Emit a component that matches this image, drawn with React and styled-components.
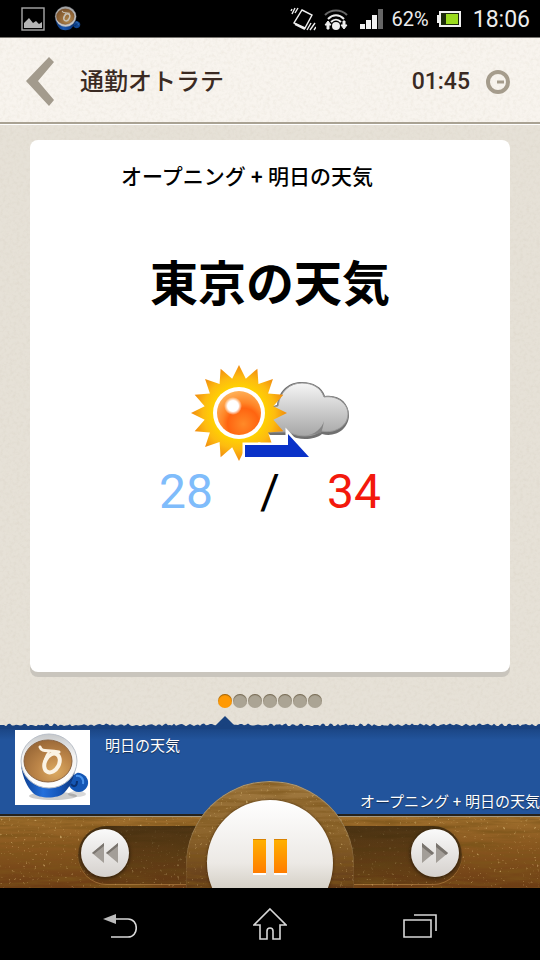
import { useState } from "react";
import styled, { createGlobalStyle } from "styled-components";

const svgUrl = (svg) => `url("data:image/svg+xml,${encodeURIComponent(svg)}")`;

// textures
const paper = svgUrl(
  `<svg xmlns="http://www.w3.org/2000/svg" width="240" height="240"><filter id="n"><feTurbulence type="fractalNoise" baseFrequency="0.3" numOctaves="3" stitchTiles="stitch"/><feColorMatrix values="0 0 0 0 0.5 0 0 0 0 0.44 0 0 0 0 0.34 0.9 0 0 0 -0.36"/></filter><rect width="240" height="240" filter="url(#n)" opacity="0.3"/></svg>`
);
const wood = svgUrl(
  `<svg xmlns="http://www.w3.org/2000/svg" width="540" height="110"><filter id="w"><feTurbulence type="fractalNoise" baseFrequency="0.02 0.22" numOctaves="4" seed="8"/><feColorMatrix values="0 0 0 0 0.2 0 0 0 0 0.09 0 0 0 0 0.01 1.8 0 0 0 -0.65"/></filter><filter id="s"><feTurbulence type="fractalNoise" baseFrequency="0.35" numOctaves="2" seed="3"/><feColorMatrix values="0 0 0 0 0.9 0 0 0 0 0.68 0 0 0 0 0.3 5 0 0 0 -3.4"/></filter><rect width="540" height="110" filter="url(#w)"/><rect width="540" height="110" filter="url(#s)" opacity="0.5"/></svg>`
);

// rough lower edge of the paper
const tornEdge = () => {
  let d = "M0 8";
  for (let x = 0; x <= 1200; x += 2) {
    const y = 4 + Math.sin(x * 2.3) * 0.8 + Math.sin(x * x * 0.37) * 0.8;
    d += `L${x} ${y.toFixed(1)}`;
  }
  return `${d}L1200 8Z`;
};

const sunRays = () => {
  const points = [];
  for (let i = 0; i < 32; i++) {
    const r = i % 2 ? 35 : 48;
    const a = (i * Math.PI) / 16;
    points.push(`${49 + r * Math.sin(a)},${48 - r * Math.cos(a)}`);
  }
  return points.join(" ");
};

const Cup = ({ size }) => (
  <svg width={size} height={size} viewBox="0 0 75 75" aria-hidden="true">
    <defs>
      <linearGradient id="cupBody" x1="0" x2="1">
        <stop offset="0" stopColor="#0c3d8c" />
        <stop offset="0.4" stopColor="#2470dc" />
        <stop offset="0.7" stopColor="#1555b8" />
        <stop offset="1" stopColor="#0a2f70" />
      </linearGradient>
      <linearGradient id="cupRim" x1="0" y1="0" x2="0" y2="1">
        <stop offset="0" stopColor="#c6c8ca" />
        <stop offset="0.4" stopColor="#f2f2f2" />
        <stop offset="1" stopColor="#ffffff" />
      </linearGradient>
      <radialGradient id="coffee" cx="0.65" cy="0.75" r="0.75">
        <stop offset="0" stopColor="#dcab62" />
        <stop offset="0.5" stopColor="#bd8649" />
        <stop offset="1" stopColor="#9c6a38" />
      </radialGradient>
    </defs>
    <ellipse cx="38" cy="66" rx="24" ry="4" fill="#000" opacity="0.2" />
    <ellipse cx="62" cy="64" rx="9" ry="3" fill="#000" opacity="0.15" />
    <path
      d="M54 48L62 43C66 42 72 46 73 51C74 57 69 62 64 62C60 62 57 60 54 56Z"
      fill="#1457b5"
    />
    <path d="M61 46C66 45 69 49 68 54" fill="none" stroke="#4a93ea" strokeWidth="2" />
    <path d="M56 54C59 58 62 56 62 51" fill="none" stroke="#0a3273" strokeWidth="2" />
    <path
      d="M6 36C8 48 12 57 18 63C24 69 43 69 49 63C55 57 59 48 61 36Z"
      fill="url(#cupBody)"
    />
    <ellipse cx="34" cy="31" rx="28" ry="27" fill="url(#cupRim)" />
    <ellipse cx="34" cy="31" rx="28" ry="27" fill="none" stroke="#b9bfc8" />
    <ellipse cx="33" cy="31" rx="24" ry="21" fill="url(#coffee)" stroke="#8a6340" />
    <g fill="none" stroke="#fbf3e4" strokeLinecap="round">
      <path d="M25 17C27 23 33 19 44 22" strokeWidth="3" />
      <path d="M34 22C30 26 30 30 29 34" strokeWidth="2" />
      <ellipse
        cx="37"
        cy="33"
        rx="7"
        ry="10"
        strokeWidth="4"
        transform="rotate(28 37 33)"
      />
    </g>
  </svg>
);

const Weather = () => (
  <svg width="160" height="98" viewBox="0 0 160 98" role="img" aria-label="晴れのち曇り">
    <defs>
      <radialGradient id="rays">
        <stop offset="0.5" stopColor="#ffd500" />
        <stop offset="0.75" stopColor="#fdbb10" />
        <stop offset="1" stopColor="#f08a10" />
      </radialGradient>
      <radialGradient id="disc" cx="0.6" cy="0.75" r="0.8">
        <stop offset="0" stopColor="#ff8a28" />
        <stop offset="0.45" stopColor="#ff6410" />
        <stop offset="0.6" stopColor="#ff8426" />
        <stop offset="1" stopColor="#ffb75e" />
      </radialGradient>
      <linearGradient id="cloud" x1="0" y1="0" x2="0" y2="1">
        <stop offset="0" stopColor="#f6f6f6" />
        <stop offset="1" stopColor="#a6a6a6" />
      </linearGradient>
      <radialGradient id="shine">
        <stop offset="0.6" stopColor="#fff" />
        <stop offset="1" stopColor="#fff" stopOpacity="0" />
      </radialGradient>
    </defs>
    <path
      d="M80 70C68 60 72 43 87 40C89 24 100 17 112 17C123 17 132 22 135 31C149 29 159 38 159 50C159 64 145 73 132 69C125 75 109 76 99 70Z"
      fill="#707070"
    />
    <path
      d="M80 67C68 58 73 44 88 41C90 26 100 18 112 18C123 18 131 23 134 32C148 30 158 39 158 49C158 61 145 69 131 66C122 73 107 72 99 67Z"
      fill="url(#cloud)"
      stroke="#9a9a9a"
    />
    <path d="M114 71C125 70 132 63 134 56C133 62 132 65 131 68Z" fill="#858585" />
    <polygon points={sunRays()} fill="url(#rays)" />
    <circle cx="49" cy="48" r="26" fill="#fff" />
    <circle cx="49" cy="48" r="22" fill="url(#disc)" />
    <circle cx="43" cy="41" r="9" fill="url(#shine)" />
    <path
      d="M55 80H98V69L119 92H55Z"
      fill="#0a32c8"
      stroke="#fff"
      strokeWidth="5"
      paintOrder="stroke"
    />
  </svg>
);

const App = () => {
  const [page, setPage] = useState(0);

  return (
    <Screen>
      <GlobalStyle />
      <StatusBar>
        <svg width="24" height="24" viewBox="0 0 24 24" aria-hidden="true">
          <rect x="1" y="1" width="22" height="22" fill="none" stroke="#a8a8a8" strokeWidth="1.4" />
          <path d="M3 21V16L8 11L12 16L15 14L18 17L21 15V21Z" fill="#b5b5b5" />
        </svg>
        <Dimmed>
          <Cup size={28} />
        </Dimmed>
        <Spacer />
        <svg width="26" height="26" viewBox="0 0 26 26" fill="none" stroke="#eee" aria-hidden="true">
          <path d="M12 4L22 9L15 22L4 17Z" strokeWidth="1.4" />
          <path d="M5 18L15 23" strokeWidth="2" />
          <path d="M8 2L5 7M5 2L2 8M2 3L1 5M25 17L20 24M21 17L17 24M26 21L24 24" strokeWidth="1.4" />
        </svg>
        <svg width="24" height="26" viewBox="0 0 24 26" fill="none" aria-hidden="true">
          <path d="M1 9C7 3 17 3 23 9" stroke="#666" strokeWidth="2" />
          <path d="M4 13C9 8 15 8 20 13M7 16C10 13 14 13 17 16" stroke="#eee" strokeWidth="2" />
          <circle cx="12" cy="20" r="4" fill="#eee" />
          <path d="M4 15L7 19H5V23H3V19H1ZM20 23L23 19H21V15H19V19H17Z" fill="#eee" stroke="#eee" />
        </svg>
        <Signal width="24" height="20" viewBox="0 0 24 20" aria-hidden="true">
          <path d="M0 15H5V20H0ZM6 11H11V20H6ZM12 6H17V20H12Z" fill="#f2f2f2" />
          <path d="M18 0H23V20H18Z" fill="#666" />
        </Signal>
        <Percent>62%</Percent>
        <svg width="24" height="16" viewBox="0 0 24 16" aria-hidden="true">
          <path d="M2 0H24V16H2V12H0V4H2Z" fill="#f0f0f0" />
          <path d="M4 2H22V14H4Z" fill="#1a2a08" />
          <path d="M9 3H21V13H9Z" fill="#9bdc1e" />
        </svg>
        <Clock>18:06</Clock>
      </StatusBar>

      <Header>
        <IconButton aria-label="戻る">
          <svg width="30" height="50" viewBox="0 0 30 50">
            <path d="M24 0L29 5L13 24L29 43L24 49L1 24Z" fill="#a39b8d" />
          </svg>
        </IconButton>
        <h1>通勤オトラテ</h1>
        <Remaining>01:45</Remaining>
        <IconButton aria-label="タイマー">
          <svg width="24" height="24" viewBox="0 0 24 24" fill="none" stroke="#a59c8c">
            <circle cx="12" cy="12" r="10" strokeWidth="4" />
            <path d="M11 12H18" strokeWidth="3" />
          </svg>
        </IconButton>
      </Header>

      <Main>
        <Card>
          <Subtitle>オープニング + 明日の天気</Subtitle>
          <h2>東京の天気</h2>
          <Weather />
          <Temperatures>
            <Temperature $color="#7fbcfb">28</Temperature>
            <Temperature $color="#000">/</Temperature>
            <Temperature $color="#f3190c">34</Temperature>
          </Temperatures>
        </Card>
        <Dots>
          {[0, 1, 2, 3, 4, 5, 6].map((i) => (
            <Dot
              key={i}
              $active={i === page}
              aria-label={`${i + 1}`}
              onClick={() => setPage(i)}
            />
          ))}
        </Dots>
      </Main>

      <NowPlaying>
        <Torn width="1200" height="8" viewBox="0 0 1200 8" aria-hidden="true">
          <path d={tornEdge()} fill="#19427f" />
        </Torn>
        <Artwork>
          <Cup size={75} />
        </Artwork>
        <Track>
          <span>明日の天気</span>
          <Program>オープニング + 明日の天気</Program>
        </Track>
      </NowPlaying>

      <Controls>
        <Groove>
          <RoundButton aria-label="前へ">
            <svg width="28" height="20" viewBox="0 0 28 20" fill="#a39e98">
              <path d="M13 0V20L1 10ZM27 0V20L15 10Z" />
              <path d="M13 0V3L3 11L1 10ZM27 0V3L17 11L15 10Z" fill="#79746e" />
            </svg>
          </RoundButton>
          <RoundButton aria-label="次へ">
            <svg width="28" height="20" viewBox="0 0 28 20" fill="#a39e98">
              <path d="M1 0V20L13 10ZM15 0V20L27 10Z" />
              <path d="M1 0V4L11 12L13 10ZM15 0V4L25 12L27 10Z" fill="#79746e" />
            </svg>
          </RoundButton>
        </Groove>
        <Hub>
          <PauseButton aria-label="一時停止">
            <i />
            <i />
          </PauseButton>
        </Hub>
      </Controls>

      <SystemNav>
        <IconButton aria-label="Back">
          <svg width="34" height="30" viewBox="0 0 34 30" fill="none" stroke="#d8d8d8">
            <path d="M12 10H25C36 10 36 28 25 28H8" strokeWidth="1.6" />
            <path d="M0 10L13 5V15Z" fill="#bcbcbc" stroke="none" />
          </svg>
        </IconButton>
        <IconButton aria-label="Home">
          <svg width="34" height="34" viewBox="0 0 34 34" fill="none" stroke="#d8d8d8">
            <path
              d="M17 2L33 18H27V32H20V24C20 20 14 20 14 24V32H7V18H1Z"
              strokeWidth="1.6"
            />
          </svg>
        </IconButton>
        <IconButton aria-label="Recent apps">
          <svg width="34" height="30" viewBox="0 0 34 30" fill="none" stroke="#d8d8d8" strokeWidth="1.6">
            <path d="M1 11H28V28H1Z" />
            <path d="M11 6H33V22" />
          </svg>
        </IconButton>
      </SystemNav>
    </Screen>
  );
};

// Styled Components
const GlobalStyle = createGlobalStyle`
  * {
    box-sizing: border-box;
    margin: 0;
    padding: 0;
  }

  body {
    background: #000;
    font-family: Roboto, "Noto Sans CJK JP", sans-serif;
  }

  button {
    border: none;
    background: none;
    cursor: pointer;
  }

  svg {
    display: block;
    flex-shrink: 0;
  }
`;

const Screen = styled.div`
  display: flex;
  flex-direction: column;
  min-height: 100vh;
  overflow: hidden;
`;

const StatusBar = styled.div`
  display: flex;
  align-items: center;
  gap: 8px;
  height: 38px;
  padding: 1px 10px 0 21px;
  background: #000;
  border-bottom: 1px solid #77746f;
  color: #ececec;
`;

const Dimmed = styled.span`
  opacity: 0.8;
`;

const Spacer = styled.span`
  flex: 1;
`;

const Signal = styled.svg`
  margin-left: 4px;
`;

const Percent = styled.span`
  font-size: 20px;
`;

const Clock = styled.span`
  margin-left: 4px;
  font-size: 23px;
`;

const Header = styled.header`
  display: flex;
  align-items: center;
  height: 86px;
  padding: 3px 30px 0 25px;
  background: ${paper}, #f8f4ee;
  border-bottom: 2px solid #a9a293;
  color: #3a2a22;

  h1 {
    flex: 1;
    margin-left: 25px;
    font-size: 24px;
    font-weight: 500;
    line-height: 36px;
  }
`;

const IconButton = styled.button`
  display: flex;
  align-items: center;
  justify-content: center;
`;

const Remaining = styled.time`
  margin-right: 16px;
  font-size: 23px;
  font-weight: 500;
`;

const Main = styled.main`
  display: flex;
  flex: 1;
  flex-direction: column;
  padding: 15px 30px 0;
  background: ${paper}, #e6e1d7;
  border-top: 1px solid #fff;
`;

const Card = styled.section`
  display: flex;
  flex: 1;
  flex-direction: column;
  align-items: center;
  padding: 21px 0;
  background: #fff;
  border-radius: 8px;
  box-shadow: 0 5px 0 #c9c5bd;
  color: #000;

  h2 {
    margin: 56px 0 44px;
    font-size: 48px;
    font-weight: 700;
    line-height: 72px;
  }
`;

const Subtitle = styled.p`
  align-self: stretch;
  padding-right: 46px;
  font-size: 21px;
  font-weight: 500;
  line-height: 32px;
  text-align: center;
`;

const Temperatures = styled.div`
  display: grid;
  grid-template-columns: repeat(3, 84px);
  font-size: 48px;
  line-height: 58px;
  text-align: center;
`;

const Temperature = styled.span`
  color: ${(props) => props.$color};
`;

const Dots = styled.nav`
  display: flex;
  align-items: center;
  justify-content: center;
  gap: 1px;
  height: 54px;
  padding-top: 4px;
`;

const Dot = styled.button`
  position: relative;
  width: 14px;
  height: 14px;
  border-radius: 50%;
  background: ${(props) => (props.$active ? "#ff9a05" : "#aba494")};
  box-shadow: inset 0 1px 1px rgba(60, 40, 10, 0.5);

  /* pointer towards the playing track */
  &::after {
    content: "";
    display: ${(props) => (props.$active ? "block" : "none")};
    position: absolute;
    top: 22px;
    left: -3px;
    border: 10px solid transparent;
    border-top: none;
    border-bottom-color: #19427f;
  }
`;

const NowPlaying = styled.section`
  position: relative;
  display: flex;
  height: 88px;
  padding: 4px 0 0 15px;
  background: linear-gradient(#19427f, #22549c 14px, #22549c);
  color: #fff;
  font-size: 15px;
  line-height: 24px;
  text-shadow: 0 1px 1px rgba(0, 0, 0, 0.5);
`;

const Torn = styled.svg`
  position: absolute;
  top: -5px;
  left: 0;
`;

const Artwork = styled.div`
  width: 75px;
  height: 75px;
  background: #fff;
`;

const Track = styled.div`
  display: flex;
  flex: 1;
  flex-direction: column;
  justify-content: space-between;
  padding: 4px 0 0 15px;
`;

const Program = styled.span`
  align-self: flex-end;
`;

const Controls = styled.section`
  position: relative;
  display: flex;
  justify-content: center;
  height: 74px;
  padding: 10px 78px 3px;
  background: ${wood}, linear-gradient(#a0702e, #8a581f 40%, #6b3c14);
  border-top: 2px solid #26221b;
  box-shadow: inset 0 1px 0 #a39a86;
`;

const Groove = styled.div`
  display: flex;
  flex: 1;
  align-items: center;
  justify-content: space-between;
  height: 58px;
  padding: 0 3px 4px;
  border-radius: 29px;
  background: linear-gradient(rgba(36, 24, 8, 0.65), rgba(36, 24, 8, 0.15));
  box-shadow: 0 1px 0 rgba(210, 160, 90, 0.45);
`;

const RoundButton = styled(IconButton)`
  width: 48px;
  height: 48px;
  border-radius: 50%;
  background: linear-gradient(#fafafa, #d5d1cd);
  box-shadow: 0 1px 4px rgba(0, 0, 0, 0.7);
`;

const Hub = styled.div`
  position: absolute;
  bottom: 0;
  left: 50%;
  width: 168px;
  height: 107px;
  padding: 19px 21px 0;
  overflow: hidden;
  border-radius: 84px 84px 0 0;
  background: ${wood}, linear-gradient(#a37c42, #8c642c 50%, #5f3816);
  box-shadow: inset 0 1px 1px #b0a081;
  transform: translateX(-50%);
`;

const PauseButton = styled(IconButton)`
  gap: 8px;
  width: 126px;
  height: 126px;
  padding-bottom: 14px;
  border-radius: 50%;
  background: linear-gradient(#ffffff, #ece9e5 50%, #cfcabf 75%);
  box-shadow: 0 0 3px rgba(40, 20, 0, 0.7);

  i {
    width: 13px;
    height: 34px;
    background: linear-gradient(#ffb000, #ff7d00);
    border-top: 1px solid #d98200;
    box-shadow: 0 2px 0 #fff;
  }
`;

const SystemNav = styled.nav`
  display: grid;
  grid-template-columns: repeat(3, 1fr);
  height: 72px;
  padding: 0 45px;
  background: #000;
`;

export default App;
